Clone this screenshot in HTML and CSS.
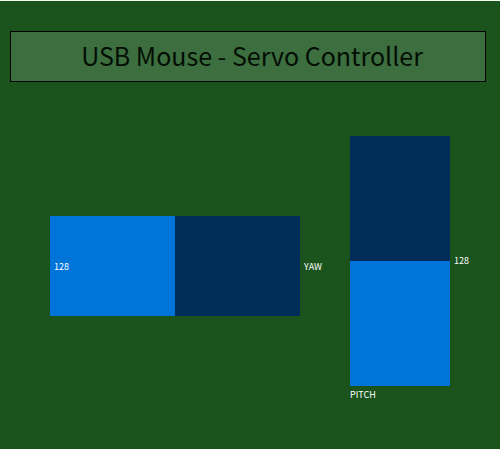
FILE: index.html
```html
<!DOCTYPE html>
<html lang="en">
<head>
<meta charset="utf-8">
<meta name="viewport" content="width=device-width, initial-scale=1">
<title>USB Mouse - Servo Controller</title>
<link rel="stylesheet" href="styles.css">
</head>
<body>
<header class="banner"><h1 class="title">USB Mouse - Servo Controller</h1></header>
<main class="controls">
  <div class="control yaw">
    <input class="slider" id="yaw" type="range" min="0" max="256" value="128">
    <output class="value" for="yaw">128</output>
    <label class="name" for="yaw">YAW</label>
  </div>
  <div class="control pitch">
    <input class="slider" id="pitch" type="range" min="0" max="256" value="128">
    <output class="value" for="pitch">128</output>
    <label class="name" for="pitch">PITCH</label>
  </div>
</main>
</body>
</html>
```
FILE: styles.css
```css
* {
  box-sizing: border-box;
}

body {
  min-height: 100vh;
  margin: 0;
  padding-top: 30px;
  border-top: 1px solid #effff0;
  background: #1b531d;
  font-family: "Noto Sans CJK SC", sans-serif;
}

.banner {
  margin: 0 14px 0 10px;
  padding: 4px 0 6px 8px;
  border: 1px solid #000;
  background: #3c6e3f;
}

.title {
  margin: 0;
  color: #030e03;
  font-size: 25px;
  font-weight: 400;
  line-height: 39px;
  text-align: center;
}

.controls {
  display: grid;
  grid-template-columns: 5fr 2fr;
  gap: 50px;
  align-items: start;
  padding: 54px 50px;
}

.control {
  position: relative;
}

.yaw {
  margin-top: 80px;
}

.slider {
  display: block;
  width: 100%;
  margin: 0;
  appearance: none;
  cursor: pointer;
}

.slider::-webkit-slider-thumb {
  appearance: none;
  width: 1px;
  height: 1px;
  opacity: 0;
}

.yaw .slider {
  height: 100px;
  background: linear-gradient(to right, #0074d9 50%, #002d5a 50%);
}

.pitch .slider {
  height: 250px;
  background: linear-gradient(to top, #0074d9 50%, #002d5a 50%);
  writing-mode: vertical-lr;
  direction: rtl;
}

.value,
.name {
  position: absolute;
  color: #fff;
  font-size: 9px;
  line-height: 12px;
  pointer-events: none;
}

.yaw .value {
  top: 45px;
  left: 4px;
}

.yaw .name {
  top: 45px;
  left: 100%;
  margin-left: 4px;
}

.pitch .value {
  top: 119px;
  left: 100%;
  margin-left: 4px;
}

.pitch .name {
  top: 100%;
  left: 0;
  margin-top: 3px;
}
```
